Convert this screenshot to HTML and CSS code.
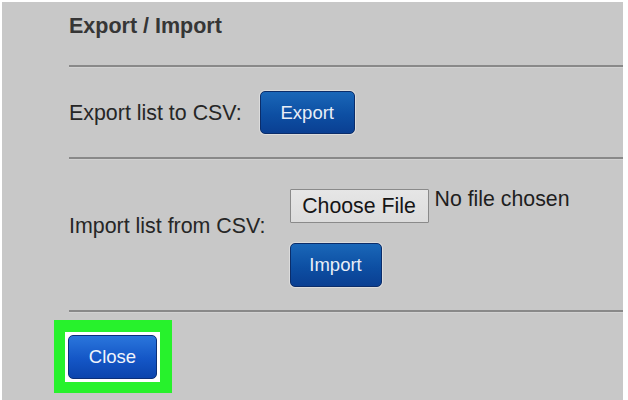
FILE: index.html
```html
<!DOCTYPE html>
<html>
<head>
<meta charset="utf-8">
<link rel="stylesheet" href="styles.css">
</head>
<body>
<div class="panel">
  <div class="content">
    <div class="title">Export / Import</div>
    <div class="rule"></div>
    <div class="row export-row">
      <span class="label">Export list to CSV:</span>
      <button class="btn">Export</button>
    </div>
    <div class="rule"></div>
    <div class="row import-row">
      <span class="label import-label">Import list from CSV:</span>
      <div class="col">
        <div class="file">
          <button class="choose">Choose File</button>
          <span class="nofile">No file chosen</span>
        </div>
        <button class="btn import-btn">Import</button>
      </div>
    </div>
    <div class="rule"></div>
  </div>
  <div class="footer">
    <div class="highlight">
      <div class="halo">
        <button class="btn close-btn">Close</button>
      </div>
    </div>
  </div>
</div>
</body>
</html>
```

FILE: styles.css
```css
html, body {
  margin: 0;
  padding: 0;
  background: #ffffff;
}
body {
  font-family: "Liberation Sans", Arial, sans-serif;
  width: 628px;
  height: 400px;
  overflow: hidden;
}
.panel {
  margin: 2px 0 0 2px;
  width: 621px;
  height: 398px;
  background: #c8c8c8;
  box-sizing: border-box;
  padding-top: 12px;
}
.content {
  margin-left: 67px;
}
.title {
  font-size: 21.5px;
  font-weight: bold;
  line-height: 24px;
  color: #363636;
  margin-bottom: 27px;
}
.rule {
  height: 2px;
  background: #898989;
  box-shadow: 0 1px 0 #d2d2d2;
}
.row {
  display: flex;
  align-items: center;
}
.label {
  font-size: 21.4px;
  line-height: 24px;
  color: #262626;
}
.export-row {
  padding: 24px 0 23px;
  gap: 18px;
}
.btn {
  font-family: "Liberation Sans", Arial, sans-serif;
  font-size: 18.5px;
  color: #e9eef7;
  border: 1px solid #0b2d6a;
  border-radius: 5px;
  background: linear-gradient(#1a67b8, #0d4fa3 55%, #0a3f92);
  box-shadow: 0 0 0 1px #dcdcdc;
  width: 95px;
  height: 43px;
  padding: 0;
  margin: 0;
}
.import-row {
  padding: 30px 0 23px;
  gap: 24px;
}
.import-label {
  padding-bottom: 24px;
}
.col {
  display: flex;
  flex-direction: column;
  align-items: flex-start;
  gap: 20px;
}
.file {
  display: flex;
  align-items: flex-start;
  gap: 6px;
}
.choose {
  font-family: "Liberation Sans", Arial, sans-serif;
  font-size: 21.3px;
  color: #151515;
  background: linear-gradient(#e6e6e6, #dcdcdc);
  border: 1px solid #8a8a8a;
  border-radius: 1px;
  width: 139px;
  height: 34px;
  padding: 0;
  margin: 0;
}
.nofile {
  font-size: 21.3px;
  line-height: 24px;
  color: #1e1e1e;
  margin-top: -2px;
}
.import-btn {
  width: 92px;
  height: 44px;
}
.footer {
  margin-left: 52px;
  padding-top: 8px;
}
.highlight {
  display: inline-block;
  background: #27f22c;
  padding: 12px 12px 11px 11px;
}
.halo {
  background: #ffffff;
  padding: 3px;
  display: flex;
}
.close-btn {
  width: 89px;
  height: 44px;
  background: linear-gradient(#2a76dc, #1456c6 55%, #0b44ad);
  border-color: #0a2f78;
  box-shadow: none;
  color: #f0f4fb;
  font-size: 18.5px;
}
```
